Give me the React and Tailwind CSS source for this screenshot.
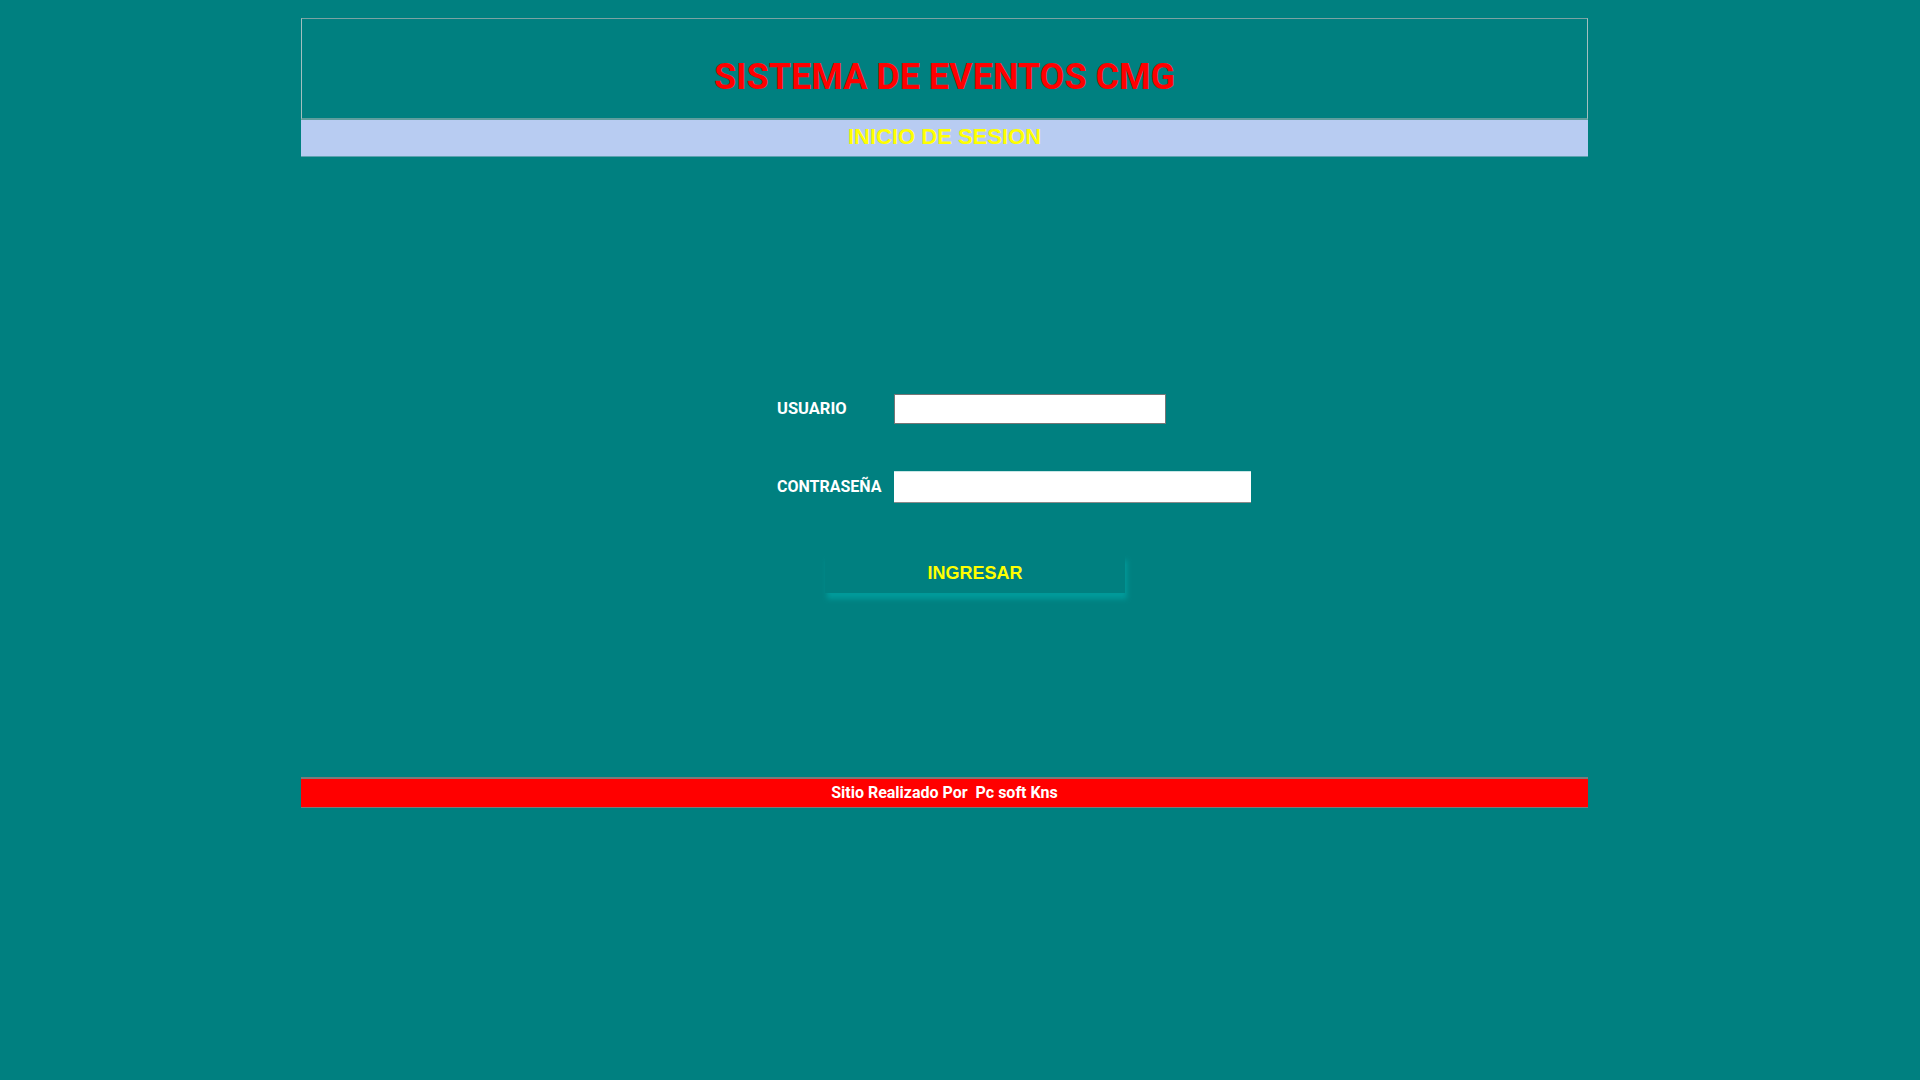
import React from "react";

/**
 * App
 *
 * Pantalla de inicio de sesión del sistema de eventos.
 * Solo presentación: encabezado, formulario y pie.
 */
function App() {
  return (
    <div className="min-h-screen bg-[#008080] pt-[18px]">
      <div className="ml-[301px] w-[1287px]">
        {/* encabezado */}
        <header className="h-[102px] border border-t-[#7aa3a3] border-x-[#a3bfbf] border-b-[#5f9e9e] border-b-2 pt-[37px]">
          <h1 className="text-center text-[36px] leading-[42px] font-bold text-[#ff0000] font-['Roboto',sans-serif]">
            SISTEMA DE EVENTOS CMG
          </h1>
        </header>

        <div className="h-[37px] bg-[#b8ccf2] border-b border-b-[#5ea2b0] pt-[4px]">
          <h2 className="text-center text-[22px] leading-[25px] font-bold text-[#ffff00] font-['Liberation_Sans',Arial,sans-serif]">
            INICIO DE SESION
          </h2>
        </div>

        {/* formulario */}
        <form className="mt-[237px] font-['Roboto',sans-serif]">
          <div className="flex items-center h-[30px]">
            <label className="ml-[476px] w-[117px] text-[16.5px] leading-[24px] font-bold text-white">
              USUARIO
            </label>
            <input
              type="text"
              className="w-[272px] h-[30px] bg-white border border-[#767676] outline-none"
            />
          </div>

          <div className="flex items-center h-[32px] mt-[47px]">
            <label className="ml-[476px] w-[117px] text-[16px] leading-[24px] font-bold text-white">
              CONTRASEÑA
            </label>
            <input
              type="password"
              className="w-[357px] h-[32px] bg-white border-t border-t-[#c8e6e6] border-b border-b-[#8a8a8a] outline-none"
            />
          </div>

          <div className="mt-[51px]">
            <button
              type="button"
              className="ml-[524px] w-[300px] h-[39px] bg-[#008080] shadow-[2px_6px_5px_#009a9a] text-[18px] font-bold text-[#ffff00] font-['Liberation_Sans',Arial,sans-serif]"
            >
              INGRESAR
            </button>
          </div>
        </form>

        {/* pie */}
        <footer className="mt-[184px] h-[31px] bg-[#ff0000] border-t-2 border-b border-[#7a7a7a] flex items-center justify-center">
          <span className="text-[16px] leading-[18px] font-bold text-white font-['Roboto',sans-serif] whitespace-pre">
            Sitio Realizado Por  Pc soft Kns
          </span>
        </footer>
      </div>
    </div>
  );
}

export default App;
